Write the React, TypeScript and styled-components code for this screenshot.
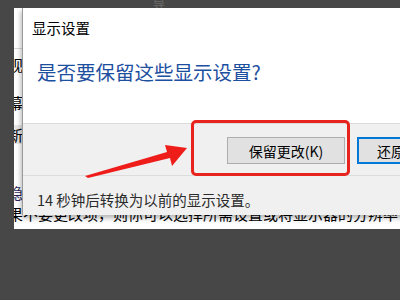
import React from 'react'
import styled, { createGlobalStyle } from 'styled-components'

const GlobalStyle = createGlobalStyle`
  html, body {
    margin: 0;
    padding: 0;
    width: 400px;
    height: 300px;
    overflow: hidden;
    background: #474747;
    font-family: "Noto Sans CJK SC", "Noto Sans", sans-serif;
  }
`

const Page = styled.div`
  position: relative;
  width: 400px;
  height: 300px;
  overflow: hidden;
  background: #474747;
`

const TopBar = styled.div`
  height: 8px;
  display: flex;
  align-items: flex-end;
  padding-left: 153px;
  color: #6c6c6c;
  font-size: 12px;
  line-height: 8px;
  overflow: hidden;
`

const BackWindow = styled.div`
  position: relative;
  margin-left: 14px;
  width: 386px;
  height: 221px;
  background: #fff;
  overflow: hidden;
`

const BackRow = styled.div<{ $h: number; $bg?: string; $color?: string; $line?: boolean }>`
  height: ${({ $h }) => $h}px;
  display: flex;
  align-items: center;
  background: ${({ $bg = 'transparent' }) => $bg};
  color: ${({ $color = '#000' }) => $color};
  border-bottom: ${({ $line }) => ($line ? '1px solid #d9d9d9' : 'none')};
  font-size: 15px;
  white-space: nowrap;
  text-indent: -6px;
`

const Dialog = styled.div`
  position: absolute;
  left: 8px;
  top: 0;
  width: 400px;
  height: 207px;
  display: flex;
  flex-direction: column;
  background: #fff;
  border-left: 1px solid #9a9a9a;
  box-shadow: -1px 3px 5px rgba(0, 0, 0, 0.3);
`

const Title = styled.div`
  height: 40px;
  line-height: 40px;
  padding-left: 9px;
  font-size: 14.5px;
  color: #000;
`

const Body = styled.div`
  flex: 0 0 75px;
  padding-left: 14px;
  padding-top: 11px;
  box-sizing: border-box;
`

const Heading = styled.div`
  font-size: 19.5px;
  line-height: 26px;
  color: #1d4f9f;
`

const ButtonBand = styled.div`
  flex: 0 0 52px;
  box-sizing: border-box;
  display: flex;
  align-items: flex-start;
  gap: 12px;
  padding: 13px 0 0 204px;
  background: #f0f0f0;
  border-top: 1px solid #dcdcdc;
`

const Button = styled.div<{ $primary?: boolean }>`
  flex: 0 0 auto;
  width: ${({ $primary }) => ($primary ? '80px' : '118px')};
  height: 27px;
  box-sizing: border-box;
  display: flex;
  align-items: center;
  justify-content: ${({ $primary }) => ($primary ? 'flex-start' : 'center')};
  padding-left: ${({ $primary }) => ($primary ? '18px' : '0')};
  background: #e1e1e1;
  border: ${({ $primary }) => ($primary ? '2px solid #0078d7' : '1px solid #adadad')};
  font-size: 14px;
  color: #000;
`

const Footer = styled.div`
  flex: 1;
  display: flex;
  align-items: center;
  padding-left: 14px;
  padding-top: 7px;
  background: #f0f0f0;
  border-top: 1px solid #dcdcdc;
  font-size: 14.5px;
  color: #2b2b2b;
`

const Highlight = styled.div`
  position: absolute;
  left: 191px;
  top: 120px;
  width: 159px;
  height: 56px;
  box-sizing: border-box;
  border: 3px solid #e8221c;
  border-radius: 5px;
`

const Arrow = styled.svg`
  position: absolute;
  left: 0;
  top: 0;
`

export default function App() {
  return (
    <>
      <GlobalStyle />
      <Page>
        <TopBar>导</TopBar>
        <BackWindow>
          <BackRow $h={40} $line />
          <BackRow $h={30}>视频</BackRow>
          <BackRow $h={46}>幕</BackRow>
          <BackRow $h={19} $bg="#e6e6e6">新</BackRow>
          <BackRow $h={38} />
          <BackRow $h={20} $color="#2a1f5a">隐</BackRow>
          <BackRow $h={23}>果不要更改项，则你可以选择所需设置或将显示器的分辨率</BackRow>
          <Dialog>
            <Title>显示设置</Title>
            <Body>
              <Heading>是否要保留这些显示设置?</Heading>
            </Body>
            <ButtonBand>
              <Button>保留更改(K)</Button>
              <Button $primary>还原</Button>
            </ButtonBand>
            <Footer>14 秒钟后转换为以前的显示设置。</Footer>
          </Dialog>
        </BackWindow>
        <Highlight />
        <Arrow width="400" height="300" viewBox="0 0 400 300">
          <polygon
            points="85,176 167,152 165,145 187,148 172,166 170,158 88,178"
            fill="#ee1d1a"
          />
        </Arrow>
      </Page>
    </>
  )
}
